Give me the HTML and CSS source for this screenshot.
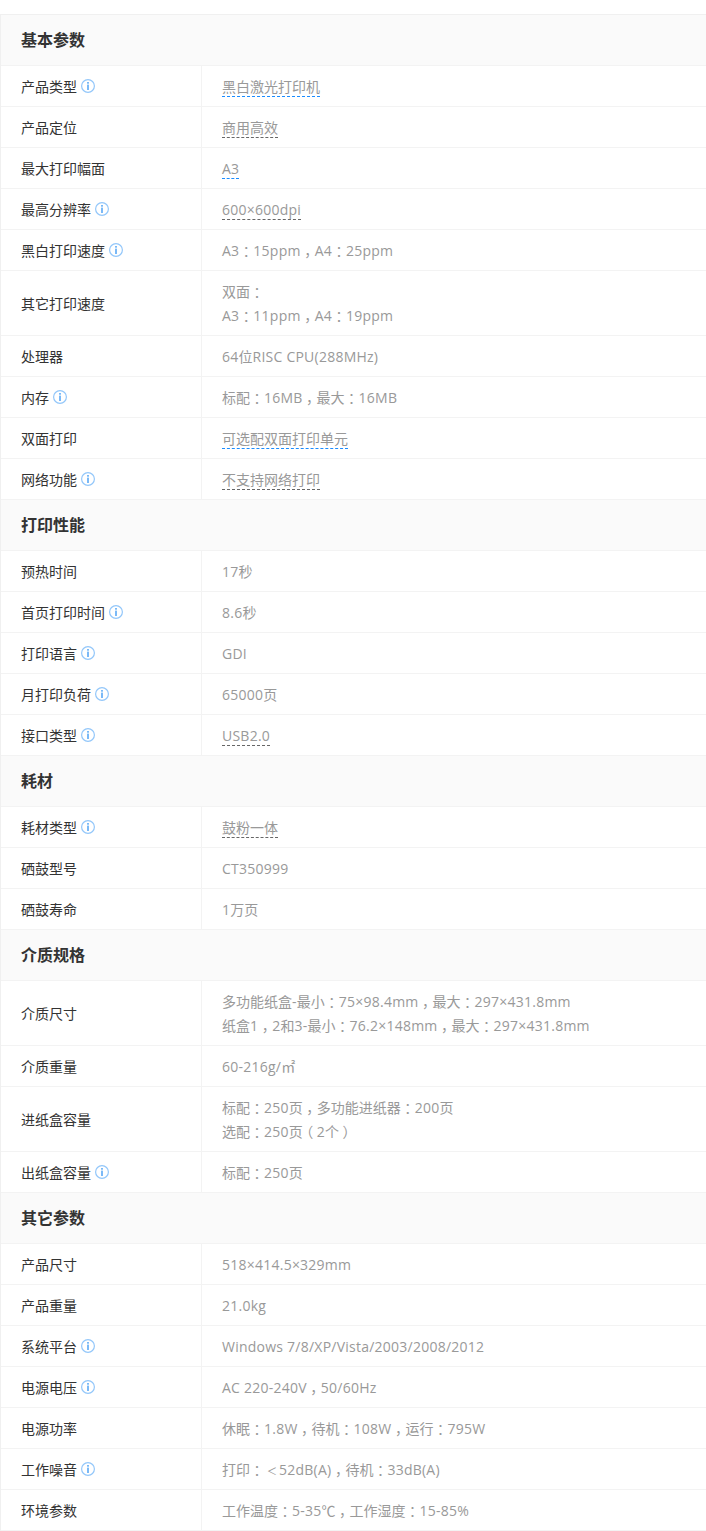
FILE: index.html
```html
<!DOCTYPE html>
<html lang="zh-CN">
<head>
<meta charset="utf-8">
<title>参数</title>
<link rel="stylesheet" href="styles.css">
</head>
<body>
<svg class="defs" width="0" height="0"><symbol id="i" viewBox="0 0 14 14"><circle cx="7" cy="7" r="6.4" fill="none" stroke="#93c7fa" stroke-width="1.2"/><rect x="6.2" y="3" width="1.6" height="1.7" fill="#5aa9f5"/><rect x="6.2" y="5.6" width="1.6" height="5.4" fill="#5aa9f5"/></symbol></svg>
<main class="spec">
<h2 class="head">基本参数</h2>
<div class="row"><div class="k">产品类型<svg class="info"><use href="#i"/></svg></div><div class="v"><span class="tip blue">黑白激光打印机</span></div></div>
<div class="row"><div class="k">产品定位</div><div class="v"><span class="tip">商用高效</span></div></div>
<div class="row"><div class="k">最大打印幅面</div><div class="v"><span class="tip blue n">A3</span></div></div>
<div class="row"><div class="k">最高分辨率<svg class="info"><use href="#i"/></svg></div><div class="v"><span class="tip n">600×600dpi</span></div></div>
<div class="row"><div class="k">黑白打印速度<svg class="info"><use href="#i"/></svg></div><div class="v"><span class="n">A3</span><span class="c">：</span><span class="n">15ppm</span><span class="c">，</span><span class="n">A4</span><span class="c">：</span><span class="n">25ppm</span></div></div>
<div class="row"><div class="k">其它打印速度</div><div class="v">双面<span class="c">：</span><br><span class="n">A3</span><span class="c">：</span><span class="n">11ppm</span><span class="c">，</span><span class="n">A4</span><span class="c">：</span><span class="n">19ppm</span></div></div>
<div class="row"><div class="k">处理器</div><div class="v"><span class="n">64</span>位<span class="n">RISC CPU(288MHz)</span></div></div>
<div class="row"><div class="k">内存<svg class="info"><use href="#i"/></svg></div><div class="v">标配<span class="c">：</span><span class="n">16MB</span><span class="c">，</span>最大<span class="c">：</span><span class="n">16MB</span></div></div>
<div class="row"><div class="k">双面打印</div><div class="v"><span class="tip blue">可选配双面打印单元</span></div></div>
<div class="row"><div class="k">网络功能<svg class="info"><use href="#i"/></svg></div><div class="v"><span class="tip">不支持网络打印</span></div></div>
<h2 class="head">打印性能</h2>
<div class="row"><div class="k">预热时间</div><div class="v"><span class="n">17</span>秒</div></div>
<div class="row"><div class="k">首页打印时间<svg class="info"><use href="#i"/></svg></div><div class="v"><span class="n">8.6</span>秒</div></div>
<div class="row"><div class="k">打印语言<svg class="info"><use href="#i"/></svg></div><div class="v"><span class="n">GDI</span></div></div>
<div class="row"><div class="k">月打印负荷<svg class="info"><use href="#i"/></svg></div><div class="v"><span class="n">65000</span>页</div></div>
<div class="row"><div class="k">接口类型<svg class="info"><use href="#i"/></svg></div><div class="v"><span class="tip n">USB2.0</span></div></div>
<h2 class="head">耗材</h2>
<div class="row"><div class="k">耗材类型<svg class="info"><use href="#i"/></svg></div><div class="v"><span class="tip">鼓粉一体</span></div></div>
<div class="row"><div class="k">硒鼓型号</div><div class="v"><span class="n">CT350999</span></div></div>
<div class="row"><div class="k">硒鼓寿命</div><div class="v"><span class="n">1</span>万页</div></div>
<h2 class="head">介质规格</h2>
<div class="row"><div class="k">介质尺寸</div><div class="v">多功能纸盒<span class="n">-</span>最小<span class="c">：</span><span class="n">75×98.4mm</span><span class="c">，</span>最大<span class="c">：</span><span class="n">297×431.8mm</span><br>纸盒<span class="n">1</span><span class="c">，</span><span class="n">2</span>和<span class="n">3-</span>最小<span class="c">：</span><span class="n">76.2×148mm</span><span class="c">，</span>最大<span class="c">：</span><span class="n">297×431.8mm</span></div></div>
<div class="row"><div class="k">介质重量</div><div class="v"><span class="n">60-216g/</span>㎡</div></div>
<div class="row"><div class="k">进纸盒容量</div><div class="v">标配<span class="c">：</span><span class="n">250</span>页<span class="c">，</span>多功能进纸器<span class="c">：</span><span class="n">200</span>页<br>选配<span class="c">：</span><span class="n">250</span>页<span class="c">（</span><span class="n">2</span>个<span class="c">）</span></div></div>
<div class="row"><div class="k">出纸盒容量<svg class="info"><use href="#i"/></svg></div><div class="v">标配<span class="c">：</span><span class="n">250</span>页</div></div>
<h2 class="head">其它参数</h2>
<div class="row"><div class="k">产品尺寸</div><div class="v"><span class="n">518×414.5×329mm</span></div></div>
<div class="row"><div class="k">产品重量</div><div class="v"><span class="n">21.0kg</span></div></div>
<div class="row"><div class="k">系统平台<svg class="info"><use href="#i"/></svg></div><div class="v"><span class="n">Windows 7/8/XP/Vista/2003/2008/2012</span></div></div>
<div class="row"><div class="k">电源电压<svg class="info"><use href="#i"/></svg></div><div class="v"><span class="n">AC 220-240V</span><span class="c">，</span><span class="n">50/60Hz</span></div></div>
<div class="row"><div class="k">电源功率</div><div class="v">休眠<span class="c">：</span><span class="n">1.8W</span><span class="c">，</span>待机<span class="c">：</span><span class="n">108W</span><span class="c">，</span>运行<span class="c">：</span><span class="n">795W</span></div></div>
<div class="row"><div class="k">工作噪音<svg class="info"><use href="#i"/></svg></div><div class="v">打印<span class="c">：</span><span class="lt">＜</span><span class="n">52dB(A)</span><span class="c">，</span>待机<span class="c">：</span><span class="n">33dB(A)</span></div></div>
<div class="row"><div class="k">环境参数</div><div class="v">工作温度<span class="c">：</span><span class="n">5-35</span>℃<span class="c">，</span>工作湿度<span class="c">：</span><span class="n">15-85%</span></div></div>
</main>
</body>
</html>
```
FILE: styles.css
```css
* { box-sizing: border-box; }
html, body { margin: 0; padding: 0; background: #fff; }
body { padding-top: 14px; font-family: "Open Sans", "Noto Sans CJK SC", sans-serif; font-size: 14px; color: #333; }
.defs { position: absolute; }
.spec { border-top: 1px solid #f0f0f0; border-left: 1px solid #f0f0f0; }
.head { margin: 0; height: 51px; padding-left: 20px; font-size: 16px; font-weight: 700; line-height: 50px; color: #333; background: #fafafa; border-bottom: 1px solid #f3f3f3; }
.row { display: grid; grid-template-columns: 201px 1fr; border-bottom: 1px solid #f3f3f3; }
.k { display: flex; align-items: center; padding-left: 20px; border-right: 1px solid #f3f3f3; color: #333; }
.v { padding: 9px 20px 7px; line-height: 24px; color: #999; }
.n { letter-spacing: .24px; }
.c { padding: 0 3.5px; font-feature-settings: "halt"; }
.lt { display: inline-block; width: 15px; height: 14px; padding-left: 3px; font-size: 10px; line-height: 14px; }
.tip { display: inline-block; height: 20px; line-height: 19px; border-bottom: 1px dashed #666; }
.tip.blue { border-bottom-color: #1a8cff; }
.info { width: 14px; height: 14px; margin-left: 4px; }
```
